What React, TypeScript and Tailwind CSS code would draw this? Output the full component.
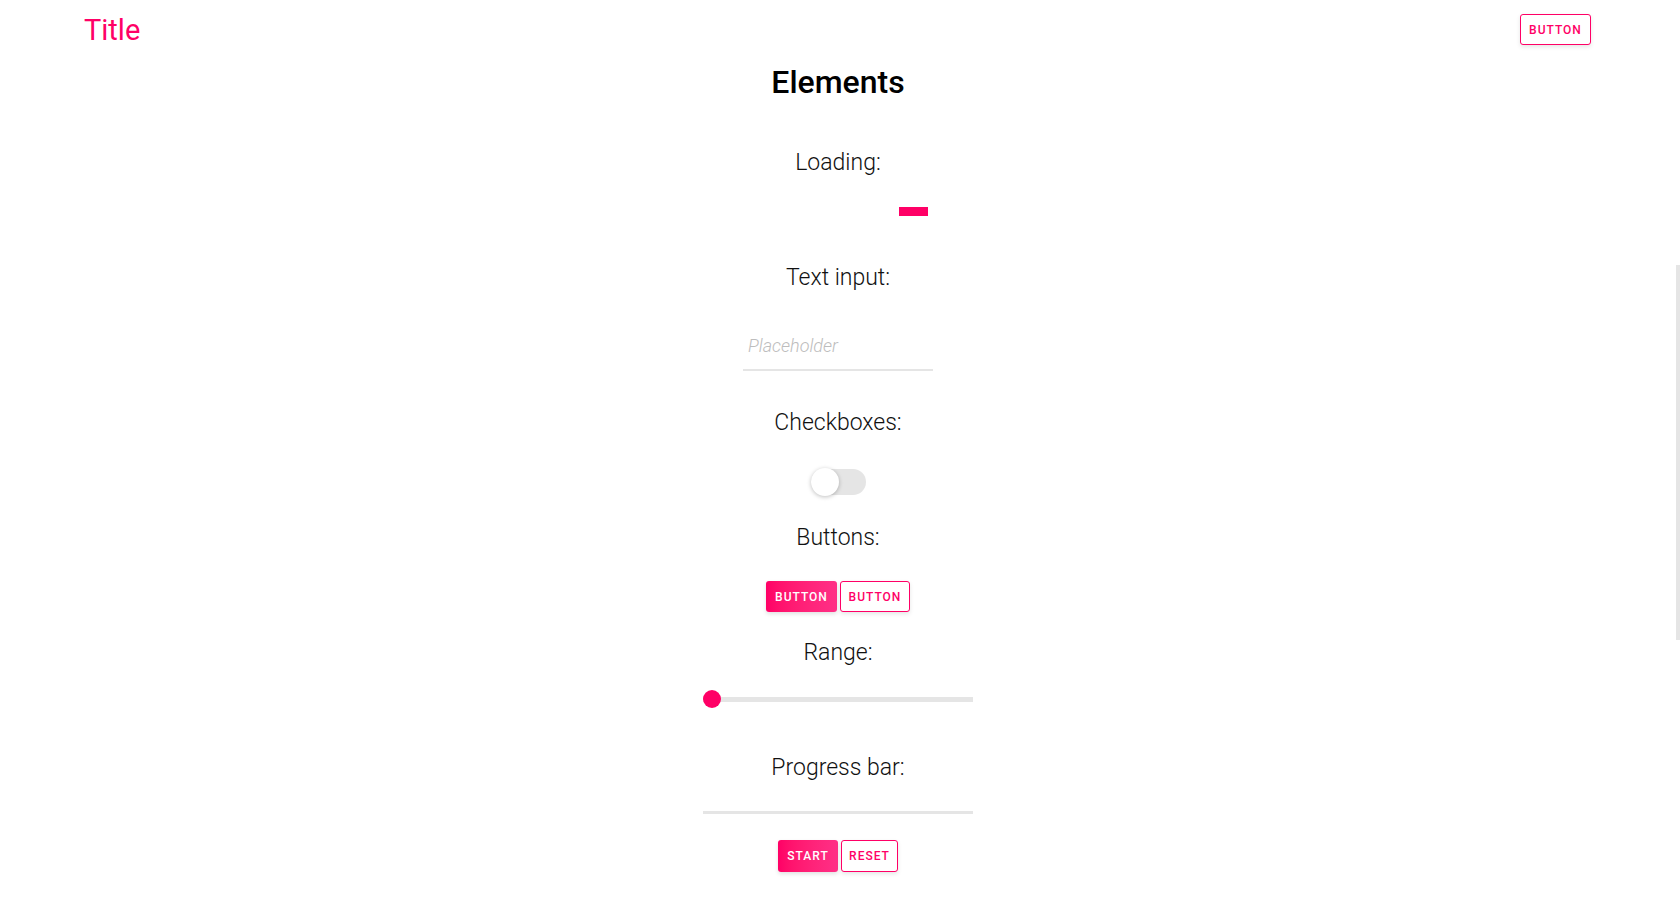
import React from "react";

const pink = "#ff0066";

function Label({ children, className = "" }: { children: React.ReactNode; className?: string }) {
  return (
    <div className={`text-[23px] leading-[28px] font-light text-[#111] ${className}`}>{children}</div>
  );
}

function FilledButton({ children, className = "" }: { children: React.ReactNode; className?: string }) {
  return (
    <button
      className={`h-[31px] rounded-[3px] bg-gradient-to-r from-[#ff0066] to-[#ff2f86] text-white text-[12px] font-medium tracking-[1px] shadow-[0_2px_4px_rgba(0,0,0,0.12)] ${className}`}
    >
      {children}
    </button>
  );
}

function OutlineButton({ children, className = "" }: { children: React.ReactNode; className?: string }) {
  return (
    <button
      className={`h-[31px] rounded-[3px] border border-[#ff0066] bg-white text-[#ff0066] text-[12px] font-medium tracking-[1px] shadow-[0_2px_4px_rgba(0,0,0,0.1)] ${className}`}
    >
      {children}
    </button>
  );
}

export default function App() {
  return (
    <div className="min-h-screen w-full bg-white font-['Roboto',sans-serif] pr-[4px]">
      <header className="h-[59px] px-[85px] flex items-center justify-between">
        <div className="-ml-[1px] text-[29px] leading-[36px] text-[#ff0066]">Title</div>
        <OutlineButton className="w-[71px]">BUTTON</OutlineButton>
      </header>

      <main className="flex flex-col items-center">
        <h1 className="mt-[4px] text-[32px] leading-[38px] font-medium text-black">Elements</h1>

        <Label className="mt-[48px]">Loading:</Label>
        <div className="mt-[30px] w-[190px] h-[9px] flex">
          <div className="ml-[156px] w-[29px] h-[9px]" style={{ backgroundColor: pink }} />
        </div>

        <Label className="mt-[48px]">Text input:</Label>
        <input
          placeholder="Placeholder"
          className="mt-[33px] w-[190px] pl-[5px] pt-[9px] pb-[11px] text-[18px] leading-[24px] font-light italic border-b-2 border-[#e5e5e5] outline-none placeholder:text-[#bdbdbd] placeholder:italic"
        />

        <Label className="mt-[38px]">Checkboxes:</Label>
        <div className="mt-[31px] relative w-[55px] h-[28px] flex items-center">
          <div className="w-[55px] h-[26px] rounded-full bg-[#e5e5e5]" />
          <div className="absolute left-0 top-0 w-[28px] h-[28px] rounded-full bg-white shadow-[0_1px_4px_rgba(0,0,0,0.25)]" />
        </div>

        <Label className="mt-[28px]">Buttons:</Label>
        <div className="mt-[29px] flex gap-[3px]">
          <FilledButton className="w-[71px]">BUTTON</FilledButton>
          <OutlineButton className="w-[70px]">BUTTON</OutlineButton>
        </div>

        <Label className="mt-[27px]">Range:</Label>
        <div className="mt-[23px] relative w-[270px] h-[18px] flex items-center">
          <div className="w-full h-[5px] bg-[#e5e5e5]" />
          <div className="absolute left-0 top-0 w-[18px] h-[18px] rounded-full" style={{ backgroundColor: pink }} />
        </div>

        <Label className="mt-[46px]">Progress bar:</Label>
        <div className="mt-[29px] w-[270px] h-[3px] bg-[#e5e5e5]" />
        <div className="mt-[26px] mb-[60px] flex gap-[3px]">
          <FilledButton className="w-[60px] h-[32px]">START</FilledButton>
          <OutlineButton className="w-[57px] h-[32px]">RESET</OutlineButton>
        </div>
      </main>

      <div className="fixed right-0 top-[265px] w-[4px] h-[375px] bg-[#e5e5e5]" />
    </div>
  );
}
